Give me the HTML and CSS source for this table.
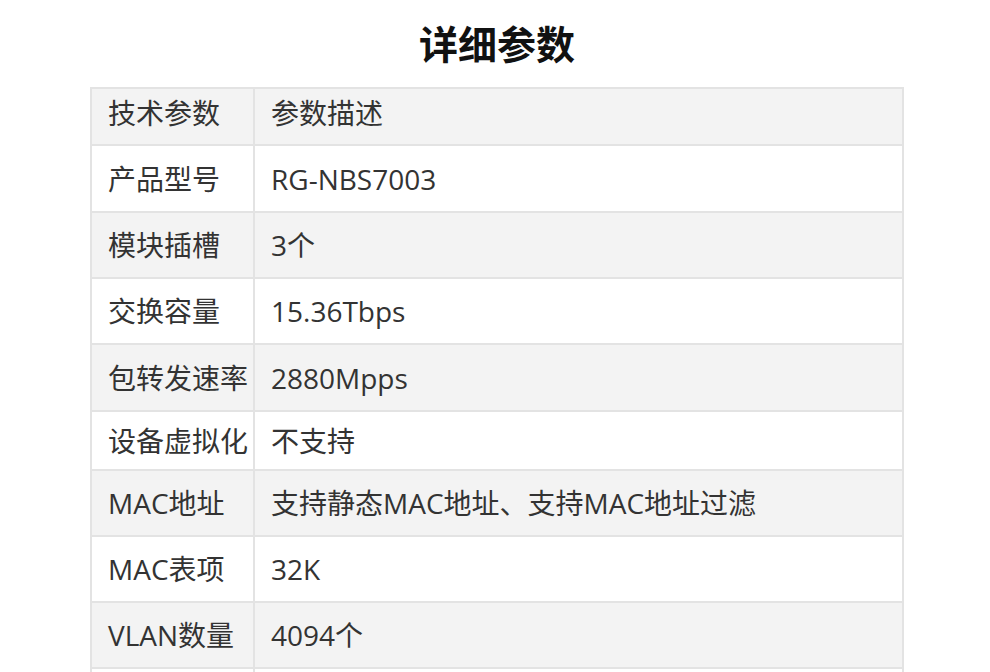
FILE: index.html
```html
<!DOCTYPE html>
<html lang="zh-CN">
<head>
<meta charset="utf-8">
<title>详细参数</title>
<link rel="stylesheet" href="styles.css">
</head>
<body>
<div class="wrap">
  <h1 class="title">详细参数</h1>
  <table class="spec">
    <tbody>
      <tr class="alt r-head"><td class="k">技术参数</td><td class="v">参数描述</td></tr>
      <tr class="r67"><td class="k">产品型号</td><td class="v">RG-NBS7003</td></tr>
      <tr class="alt r66"><td class="k">模块插槽</td><td class="v">3个</td></tr>
      <tr class="r66"><td class="k">交换容量</td><td class="v">15.36Tbps</td></tr>
      <tr class="alt r67"><td class="k">包转发速率</td><td class="v">2880Mpps</td></tr>
      <tr class="r59"><td class="k">设备虚拟化</td><td class="v">不支持</td></tr>
      <tr class="alt r66"><td class="k">MAC地址</td><td class="v">支持静态MAC地址、支持MAC地址过滤</td></tr>
      <tr class="r66"><td class="k">MAC表项</td><td class="v">32K</td></tr>
      <tr class="alt r66"><td class="k">VLAN数量</td><td class="v">4094个</td></tr>
      <tr class="r66"><td class="k">&nbsp;</td><td class="v">&nbsp;</td></tr>
    </tbody>
  </table>
</div>
</body>
</html>
```

FILE: styles.css
```css
html, body {
  margin: 0;
  padding: 0;
  background: #ffffff;
}
body {
  padding-left: 4px;
  font-family: "Open Sans", "Noto Sans CJK SC", sans-serif;
  color: #333333;
  overflow: hidden;
}
.wrap {
  width: 814px;
  margin: 0 auto;
}
.title {
  margin: 0;
  padding-top: 17px;
  height: 87px;
  box-sizing: border-box;
  font-family: "Noto Sans CJK SC", sans-serif;
  font-size: 39px;
  line-height: 50px;
  font-weight: 700;
  color: #111111;
  text-align: center;
}
.spec {
  width: 100%;
  border-collapse: collapse;
  border: 2px solid #e3e3e3;
  table-layout: fixed;
}
.spec td {
  border: 2px solid #e3e3e3;
  padding: 0 0 0 16px;
  font-size: 28px;
  line-height: 36px;
  vertical-align: middle;
  white-space: nowrap;
}
.spec td.k {
  width: 163px;
  box-sizing: border-box;
}
.spec tr.alt td {
  background: #f3f3f3;
}
.r-head td { height: 47px; padding-bottom: 8px; }
.r67 td { height: 65px; }
.r66 td { height: 64px; }
.r59 td { height: 57px; }
```
